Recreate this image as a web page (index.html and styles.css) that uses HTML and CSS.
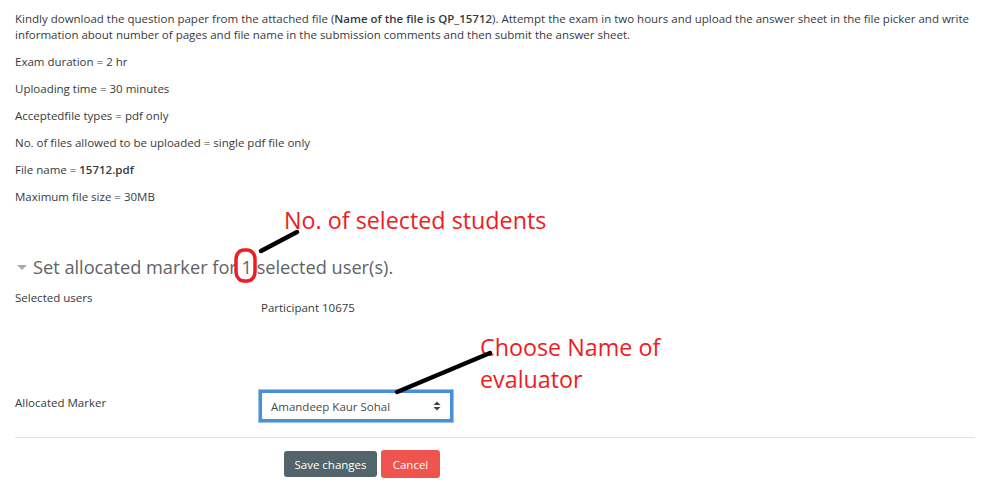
FILE: index.html
```html
<!DOCTYPE html>
<html>
<head>
<meta charset="utf-8">
<link rel="stylesheet" href="styles.css">
</head>
<body>
<div class="page">
  <div class="intro">
    <p>Kindly download the question paper from the attached file (<b>Name of the file is QP_15712</b>). Attempt the exam in two hours and upload the answer sheet in the file picker and write information about number of pages and file name in the submission comments and then submit the answer sheet.</p>
    <p>Exam duration = 2 hr</p>
    <p>Uploading time = 30 minutes</p>
    <p>Acceptedfile types = pdf only</p>
    <p>No. of files allowed to be uploaded = single pdf file only</p>
    <p>File name = <b>15712.pdf</b></p>
    <p>Maximum file size = 30MB</p>
  </div>

  <h3 class="legend"><span class="caret"></span>Set allocated marker for 1 selected user(s).</h3>

  <div class="row row-users">
    <div class="label">Selected users</div>
    <div class="value participant">Participant 10675</div>
  </div>

  <div class="row row-marker">
    <div class="label">Allocated Marker</div>
    <div class="value">
      <div class="select">
        <span>Amandeep Kaur Sohal</span>
        <svg class="updown" width="8" height="10" viewBox="0 0 8 10"><path d="M0.5 4 L4 0.5 L7.5 4 Z M0.5 6 L4 9.5 L7.5 6 Z" fill="#444"/></svg>
      </div>
    </div>
  </div>

  <hr class="sep">

  <div class="buttons">
    <button class="btn save">Save changes</button>
    <button class="btn cancel">Cancel</button>
  </div>

  <div class="note note1">No. of selected students</div>
  <div class="note note2">Choose Name of<br>evaluator</div>
  <svg class="overlay" width="989" height="499" viewBox="0 0 989 499">
    <rect x="236" y="250" width="19" height="31" rx="8" ry="9" fill="none" stroke="#ee1c24" stroke-width="3.5"/>
    <line x1="261" y1="251" x2="297" y2="232" stroke="#000" stroke-width="4.5" stroke-linecap="round"/>
    <line x1="397" y1="392" x2="490" y2="353" stroke="#000" stroke-width="4.5" stroke-linecap="round"/>
  </svg>
</div>
</body>
</html>
```
FILE: styles.css
```css
html, body {
  margin: 0;
  padding: 0;
  background: #fff;
}
body {
  font-family: "Open Sans", "Liberation Sans", sans-serif;
  font-size: 11.5px;
  color: #373a3c;
}
.page {
  position: relative;
  width: 989px;
  height: 499px;
  overflow: hidden;
  padding: 11px 14px 0 15px;
  box-sizing: border-box;
}
.intro p {
  margin: 0 0 11px 0;
  line-height: 16px;
}
.intro b {
  font-weight: 600;
}
.legend {
  margin: 50px 0 0 2px;
  font-weight: 400;
  font-size: 18.2px;
  color: #5f6368;
  display: flex;
  align-items: center;
  line-height: 24px;
}
.caret {
  width: 0;
  height: 0;
  border-left: 5px solid transparent;
  border-right: 5px solid transparent;
  border-top: 5px solid #aaa;
  margin-right: 6px;
  margin-top: 1px;
}
.row {
  display: grid;
  grid-template-columns: 244px 1fr;
}
.row-users {
  margin-top: 11px;
  height: 88px;
}
.participant {
  margin-top: 10px;
  padding-left: 2px;
}
.row-marker {
  margin-top: 12px;
  align-items: start;
}
.row-marker .label {
  margin-top: 5px;
}
.select {
  width: 194px;
  height: 32px;
  box-sizing: border-box;
  border: 3px solid #4a90d9;
  box-shadow: 0 0 0 1px #9cc3ee;
  display: flex;
  align-items: center;
  justify-content: space-between;
  padding: 0 9px 0 9px;
  font-size: 11.5px;
  color: #4a4a4a;
}
.sep {
  border: 0;
  border-top: 1px solid #dee2e6;
  margin: 15px 0 0 0;
}
.buttons {
  display: flex;
  gap: 4px;
  margin-top: 12px;
  padding-left: 269px;
  align-items: center;
}
.btn {
  font-family: "Open Sans", "Liberation Sans", sans-serif;
  font-size: 11.5px;
  color: #fff;
  border: 0;
  border-radius: 3px;
  padding: 0;
}
.save {
  background: #53646b;
  width: 93px;
  height: 26px;
}
.cancel {
  background: #f0544f;
  width: 59px;
  height: 28px;
}
.note {
  position: absolute;
  color: #ee1c24;
  font-family: "Open Sans", "Liberation Sans", sans-serif;
  font-size: 23.3px;
  line-height: 32px;
}
.note1 {
  left: 284px;
  top: 204px;
}
.note2 {
  left: 480px;
  top: 331px;
}
.overlay {
  position: absolute;
  left: 0;
  top: 0;
  pointer-events: none;
}
```
